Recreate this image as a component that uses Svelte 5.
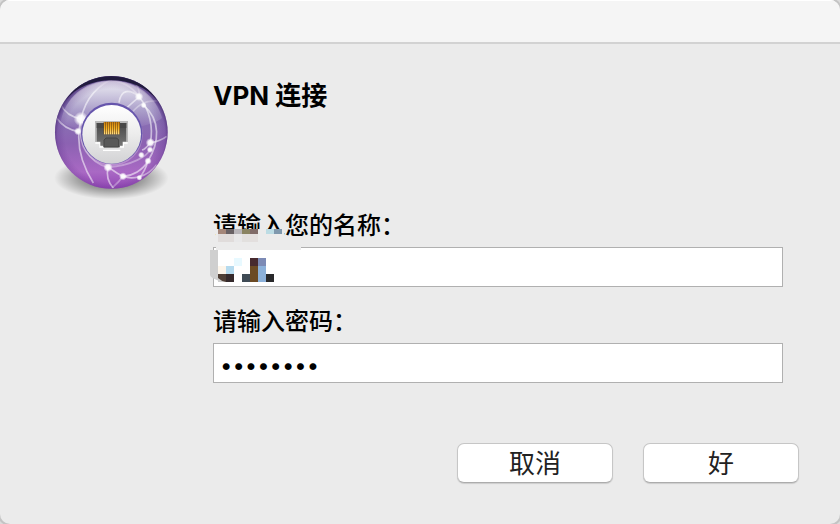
<script>
	let name = $state('');
	let password = $state('password');

	// pixelated patch that hides the account name: x, y, width, height, fill
	const blocks = [
		[8, 0, 8, 5, '#a48679'],
		[16, 0, 8, 5, '#686164'],
		[24, 0, 8, 5, '#b9b6ba'],
		[32, 0, 8, 5, '#8a8462'],
		[40, 0, 8, 5, '#806b68'],
		[56, 0, 8, 5, '#bcdce4'],
		[64, 0, 8, 5, '#7f98ad'],
		[8, 5, 16, 8, '#e0dcdb'],
		[24, 5, 8, 8, '#e8e8e9'],
		[32, 5, 8, 8, '#e2e0de'],
		[40, 5, 8, 8, '#e3dfde'],
		[24, 29, 8, 8, '#e8f9ff'],
		[40, 29, 8, 8, '#472a2f'],
		[48, 29, 8, 8, '#7c8ab5'],
		[8, 37, 8, 8, '#fdf5ea'],
		[16, 37, 8, 8, '#b5daee'],
		[40, 37, 8, 8, '#6b4a24'],
		[48, 37, 8, 8, '#8cb1da'],
		[8, 45, 8, 8, '#4f3f35'],
		[16, 45, 8, 8, '#352a2c'],
		[32, 45, 8, 8, '#3f4b55'],
		[40, 45, 8, 8, '#6b4a24'],
		[48, 45, 8, 8, '#8cb1da'],
		[56, 45, 8, 8, '#29292b']
	];

	// glowing points on the globe: x, y, radius
	const nodes = [
		[105, 153, 22],
		[96, 190, 12],
		[279, 86, 13],
		[293, 112, 9],
		[313, 224, 14],
		[312, 245, 10],
		[286, 261, 10],
		[306, 279, 11],
		[186, 298, 14],
		[231, 325, 12],
		[280, 329, 9]
	];
</script>

<div class="dialog">
	<header></header>
	<form onsubmit={(e) => e.preventDefault()}>
		<svg class="globe" viewBox="0 0 396 396" aria-hidden="true">
			<defs>
				<linearGradient id="ball" x1="0" y1="0" x2="0" y2="1">
					<stop offset="0" stop-color="#8d86b4" />
					<stop offset=".3" stop-color="#8675b3" />
					<stop offset=".6" stop-color="#8c62b2" />
					<stop offset=".85" stop-color="#a969c4" />
					<stop offset="1" stop-color="#9348b5" />
				</linearGradient>
				<radialGradient id="rim" cx=".5" cy=".53" r=".53">
					<stop offset=".78" stop-color="#4a1c7c" stop-opacity="0" />
					<stop offset=".9" stop-color="#4a1c7c" stop-opacity=".2" />
					<stop offset="1" stop-color="#2c1450" stop-opacity=".85" />
				</radialGradient>
				<linearGradient id="gloss" x1="0" y1="0" x2="0" y2="1">
					<stop offset="0" stop-color="#fff" stop-opacity=".85" />
					<stop offset=".6" stop-color="#fff" stop-opacity=".3" />
					<stop offset="1" stop-color="#fff" stop-opacity="0" />
				</linearGradient>
				<radialGradient id="shade">
					<stop offset="0" stop-color="#000" stop-opacity=".7" />
					<stop offset=".6" stop-color="#000" stop-opacity=".3" />
					<stop offset="1" stop-color="#000" stop-opacity="0" />
				</radialGradient>
				<radialGradient id="glow">
					<stop offset="0" stop-color="#fff" />
					<stop offset=".5" stop-color="#fff" stop-opacity=".9" />
					<stop offset="1" stop-color="#fff" stop-opacity="0" />
				</radialGradient>
				<linearGradient id="disc" x1="0" y1="0" x2="0" y2="1">
					<stop offset="0" stop-color="#fff" />
					<stop offset=".5" stop-color="#ececec" />
					<stop offset="1" stop-color="#d2d2d4" />
				</linearGradient>
				<linearGradient id="port" x1="0" y1="0" x2="0" y2="1">
					<stop offset="0" stop-color="#484848" />
					<stop offset="1" stop-color="#787878" />
				</linearGradient>
				<linearGradient id="pins" x1="0" y1="0" x2="0" y2="1">
					<stop offset="0" stop-color="#c87d10" />
					<stop offset=".5" stop-color="#f5b021" />
					<stop offset="1" stop-color="#ffe08a" />
				</linearGradient>
				<clipPath id="edge"><circle cx="196" cy="193" r="168" /></clipPath>
			</defs>
			<ellipse cx="196" cy="330" rx="172" ry="64" fill="url(#shade)" />
			<circle cx="196" cy="193" r="169" fill="url(#ball)" />
			<g clip-path="url(#edge)">
				<path d="M196 38C110 38 58 92 44 160C90 205 300 190 348 150C330 85 275 38 196 38Z" fill="url(#gloss)" />
				<g fill="none" stroke="#fff" stroke-width="5" stroke-opacity=".55">
					<path d="M216 26C155 48 118 92 105 153C88 220 104 285 142 345" />
					<path d="M44 110C58 138 80 148 105 153" />
					<path d="M32 150C50 176 70 186 96 190" />
					<path d="M279 86C250 62 225 64 219 104" />
					<path d="M180 34C230 38 262 60 279 86C312 125 322 180 313 224" />
					<path d="M258 36C278 52 282 70 279 86" />
					<path d="M236 128C252 106 270 98 279 86" />
					<path d="M256 136C284 100 310 98 340 98" stroke-opacity=".35" />
					<path d="M293 112C345 155 340 225 306 279C290 307 260 323 231 325" />
					<path d="M362 205C345 218 330 222 313 224" />
					<path d="M288 246C300 243 306 232 313 224" />
					<path d="M312 245C304 264 260 292 186 298" stroke-opacity=".35" />
					<path d="M105 153C94 230 130 285 186 298" stroke-opacity=".35" />
					<path d="M186 298C205 309 217 319 231 325C255 334 300 332 332 290" />
					<path d="M186 298C180 325 188 345 202 360" />
					<path d="M231 325C221 340 210 350 198 360" stroke-opacity=".35" />
					<path d="M306 279C300 300 292 316 280 329" />
				</g>
			</g>
			<circle cx="196" cy="193" r="169" fill="url(#rim)" />
			<path d="M58 98C118 0 274 0 334 98C274 16 118 16 58 98Z" fill="#211b3d" />
			{#each nodes as [cx, cy, r]}
				<circle {cx} {cy} {r} fill="url(#glow)" />
			{/each}
			<circle cx="196" cy="200" r="94" fill="#fff" fill-opacity=".25" />
			<circle cx="197" cy="196" r="92" fill="#6655ac" />
			<circle cx="197" cy="199" r="88" fill="url(#disc)" />
			<path d="M147 159H246V222H241V167H152V222H147Z" fill="#b9b9b9" />
			<path d="M148 225H162V237H172M222 237H232V225H245" fill="none" stroke="#fff" stroke-width="4" />
			<path d="M152 165H241V221H230V233H222V238H172V233H163V221H152Z" fill="url(#port)" />
			<path d="M152 165H241V180H152Z" fill="#484848" />
			<path d="M174 237V216L180 210H212L218 216V237Z" fill="#585858" stroke="#444" stroke-width="3" />
			<path d="M171 247H223" stroke="#fff" stroke-width="4" />
			<path d="M173 162H222V199H173Z" fill="#714a14" />
			{#each [174, 180, 186, 192, 198, 204, 210, 216] as x}
				<rect {x} y="162" width="4" height="37" fill="url(#pins)" />
			{/each}
		</svg>

		<div class="content">
			<h1>VPN 连接</h1>
			<div class="field">
				<label for="name">请输入您的名称：</label>
				<input id="name" type="text" autocomplete="off" bind:value={name} />
				<svg class="mosaic" viewBox="0 0 92 54" aria-hidden="true">
					<path d="M6 0H74V13H91V21H6Z" fill="#ebebeb" />
					<path d="M0 21H20V53H12Q0 49 0 46Z" fill="#cfcfcf" />
					<path d="M8 21H91V53H12L8 49Z" fill="#fff" />
					{#each blocks as [x, y, width, height, fill]}
						<rect {x} {y} {width} {height} {fill} />
					{/each}
					<path d="M8 49V53H16Q11 52 8 49Z" fill="#cfcfcf" />
				</svg>
			</div>
			<div class="field">
				<label for="password">请输入密码：</label>
				<input id="password" type="password" bind:value={password} />
			</div>
			<div class="buttons">
				<button type="button">取消</button>
				<button type="submit">好</button>
			</div>
		</div>
	</form>
</div>

<style>
	:global(body) {
		background: #dcdcdc;
	}

	.dialog {
		box-sizing: border-box;
		min-height: 100vh;
		border-radius: 10px;
		overflow: hidden;
		background: #ebebeb;
		color: #000;
		font-family: Inter, "Noto Sans CJK SC", sans-serif;
		box-shadow: 0 0 0 2px #c4c4c4;
	}

	header {
		height: 42px;
		background: #f5f5f5;
		border-bottom: 2px solid #d2d2d2;
		box-shadow: inset 0 1px #fff;
	}

	form {
		display: flex;
		gap: 35px;
		padding: 24px 41px 40px 46px;
	}

	.globe {
		flex: none;
		width: 132px;
		height: 132px;
	}

	.content {
		flex: 1;
		padding-top: 8px;
	}

	h1 {
		margin: 0 0 91px;
		font-size: 26px;
		font-weight: 700;
		line-height: 40px;
	}

	.field {
		position: relative;
		margin: 0 16px 16px 0;
	}

	label {
		display: block;
		padding-bottom: 3px;
		font-size: 24px;
		font-weight: 500;
		line-height: 37px;
	}

	input {
		display: block;
		box-sizing: border-box;
		width: 100%;
		height: 40px;
		padding: 0 8px;
		border: 1px solid #b0b0b0;
		border-radius: 0;
		outline: none;
		background: #fff;
		color: #000;
		font: 24px Inter, "Noto Sans CJK SC", sans-serif;
	}

	input[type="password"] {
		padding: 4px 6px 0;
		font-size: 22px;
	}

	/* covers the lower part of the label and the start of the name box */
	.mosaic {
		position: absolute;
		left: -3px;
		bottom: 4px;
		width: 92px;
		height: 54px;
	}

	.buttons {
		display: flex;
		justify-content: flex-end;
		gap: 30px;
		margin-top: 60px;
	}

	button {
		width: 156px;
		height: 40px;
		padding: 0 0 2px;
		border: 1px solid #c6c6c6;
		border-bottom-color: #acacac;
		border-radius: 7px;
		background: #fff;
		box-shadow: 0 1px 1px #0002;
		color: #222;
		font: 26px/36px "Noto Sans CJK SC", sans-serif;
	}
</style>
